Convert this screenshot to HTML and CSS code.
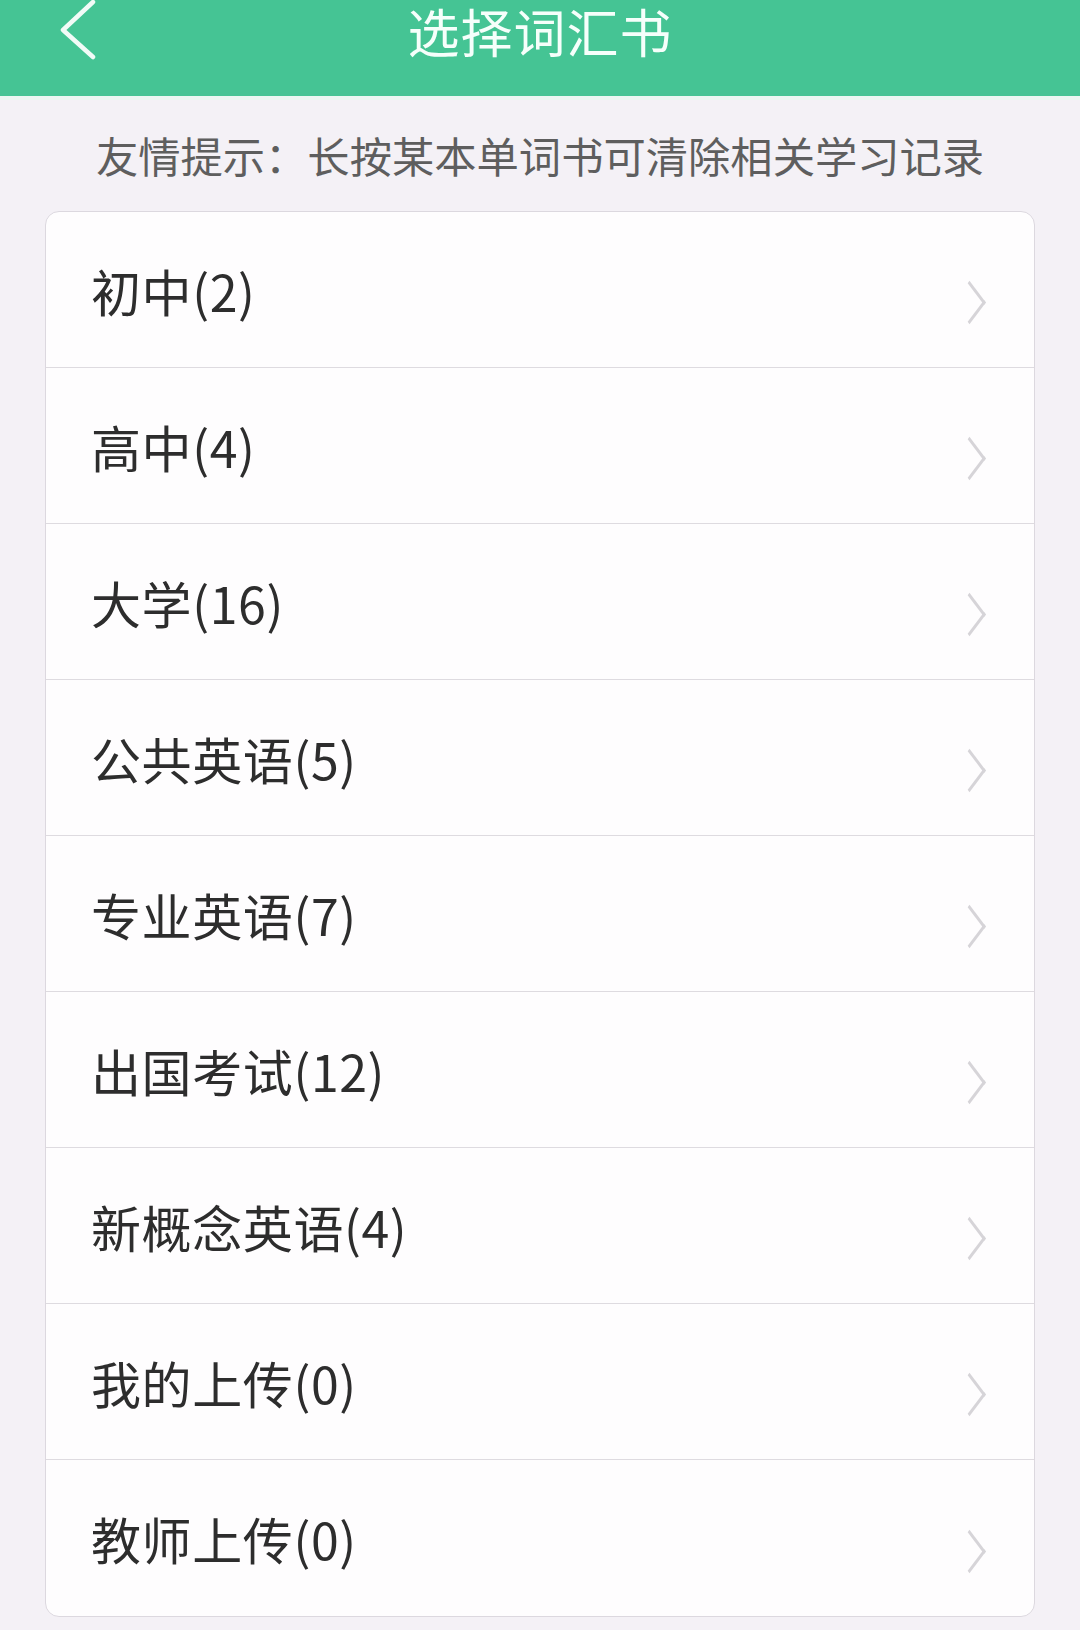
FILE: index.html
```html
<!DOCTYPE html>
<html lang="zh-CN">
<head>
  <meta charset="UTF-8">
  <title>选择词汇书</title>
  <link rel="stylesheet" href="styles.css">
</head>
<body>

<header class="topbar">
  <a class="back" href="#">
    <svg width="40" height="62" viewBox="0 0 40 62">
      <polyline points="34,2 4,30 34,57" fill="none" stroke="#f2fbf7" stroke-width="4.5" stroke-linecap="round" stroke-linejoin="round"/>
    </svg>
  </a>
  <h1 class="title">选择词汇书</h1>
  <span></span>
</header>

<p class="hint">友情提示：长按某本单词书可清除相关学习记录</p>

<ul class="book-list">
  <li class="book-row"><span>初中(2)</span><i class="arrow"></i></li>
  <li class="book-row"><span>高中(4)</span><i class="arrow"></i></li>
  <li class="book-row"><span>大学(16)</span><i class="arrow"></i></li>
  <li class="book-row"><span>公共英语(5)</span><i class="arrow"></i></li>
  <li class="book-row"><span>专业英语(7)</span><i class="arrow"></i></li>
  <li class="book-row"><span>出国考试(12)</span><i class="arrow"></i></li>
  <li class="book-row"><span>新概念英语(4)</span><i class="arrow"></i></li>
  <li class="book-row"><span>我的上传(0)</span><i class="arrow"></i></li>
  <li class="book-row"><span>教师上传(0)</span><i class="arrow"></i></li>
</ul>

</body>
</html>
```

FILE: styles.css
```css
body {
  margin: 0;
  background: #f4f1f6;
  font-family: "Noto Sans CJK SC", "Noto Sans", sans-serif;
  overflow: hidden;
}

.topbar {
  height: 96px;
  background: #45c494;
  border-bottom: 4px solid #eaf7f2;
  display: grid;
  grid-template-columns: 1fr auto 1fr;
  align-items: start;
}

.back {
  display: block;
  margin-left: 59px;
  line-height: 0;
}

.title {
  margin: 2px 0 0;
  color: #f6fffb;
  font-size: 52px;
  font-weight: 400;
  line-height: 58px;
  letter-spacing: 1px;
}

.hint {
  margin: 30px 0 31px;
  text-align: center;
  color: #5e5e5e;
  font-size: 42.3px;
  line-height: 50px;
}

.book-list {
  list-style: none;
  margin: 0 45px;
  padding: 0;
  background: #fefdfe;
  border: 1px solid #dcd8df;
  border-radius: 14px;
}

.book-row {
  height: 156px;
  border-bottom: 1px solid #dedbe0;
  display: flex;
  align-items: center;
  justify-content: space-between;
  padding: 0 47px 0 45px;
  box-sizing: border-box;
  color: #2d2d2d;
  font-size: 50px;
  letter-spacing: 0.6px;
}

.book-row:last-child {
  border-bottom: none;
}

.arrow {
  width: 24px;
  height: 24px;
  border-top: 3px solid #d6d4d8;
  border-right: 3px solid #d6d4d8;
  transform: rotate(45deg) skew(8deg, 8deg);
  margin-top: 26px;
  margin-right: 4px;
}
```
